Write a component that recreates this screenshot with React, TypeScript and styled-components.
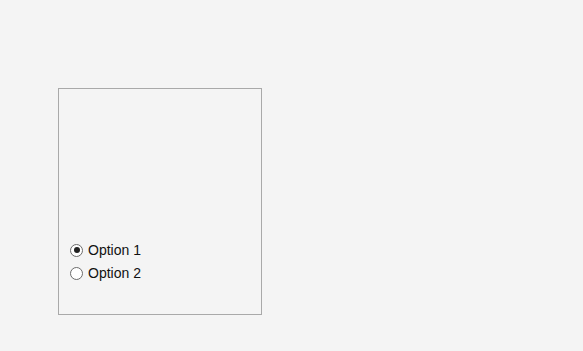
import styled, { createGlobalStyle } from "styled-components";

const GlobalStyle = createGlobalStyle`
  html, body {
    margin: 0;
    padding: 0;
    background: #f4f4f4;
    font-family: "Liberation Sans", Arial, sans-serif;
  }
`;

const options = ["Option 1", "Option 2"];

export default function App() {
  return (
    <>
      <GlobalStyle />
      <Page>
        <Panel>
          <Group>
            {options.map((opt, i) => (
              <Row key={opt}>
                <Radio type="radio" name="opt" defaultChecked={i === 0} />
                <Label>{opt}</Label>
              </Row>
            ))}
          </Group>
        </Panel>
      </Page>
    </>
  );
}

const Page = styled.div`
  padding: 88px 0 0 58px;
`;

const Panel = styled.div`
  box-sizing: border-box;
  width: 204px;
  height: 227px;
  border: 1px solid #a9a9a9;
  display: flex;
  flex-direction: column;
  justify-content: flex-end;
  padding: 0 0 32px 11px;
`;

const Group = styled.div`
  display: flex;
  flex-direction: column;
  gap: 5px;
`;

const Row = styled.label`
  display: flex;
  align-items: center;
  height: 18px;
  font-size: 14px;
  color: #111;
`;

const Radio = styled.input`
  appearance: none;
  box-sizing: border-box;
  width: 13px;
  height: 13px;
  margin: 0 5px 0 0;
  border: 1px solid #6b6b6b;
  border-radius: 50%;
  background: #fff;
  display: grid;
  place-items: center;

  &:checked::after {
    content: "";
    width: 6px;
    height: 6px;
    border-radius: 50%;
    background: #222;
  }
`;

const Label = styled.span`
  line-height: 18px;
`;
